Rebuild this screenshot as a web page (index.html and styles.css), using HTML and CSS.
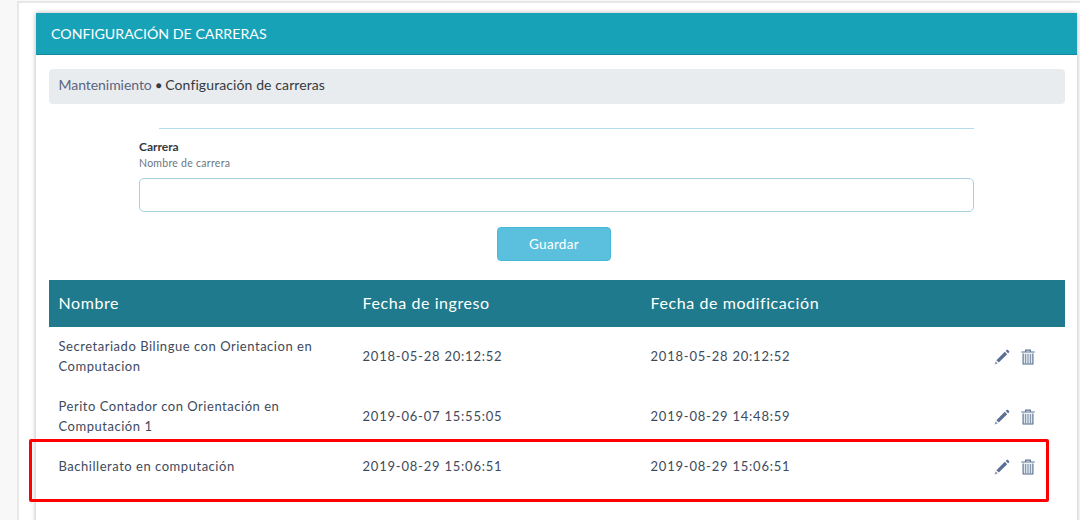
FILE: index.html
```html
<!DOCTYPE html>
<html lang="es">
<head>
<meta charset="utf-8">
<title>Configuración de carreras</title>
<link rel="stylesheet" href="styles.css">
</head>
<body>
<svg class="defs" width="0" height="0" aria-hidden="true">
  <symbol id="pencil" viewBox="0 0 16 16">
    <path d="M0.6 15.4 L1.6 12.2 L3.8 14.4 Z" fill="#8c9ab0"/>
    <path d="M2.4 11.2 L10.8 2.8 L13.2 5.2 L4.8 13.6 Z" fill="#5b6f94"/>
    <path d="M11.7 1.9 L12.8 0.8 Q13.3 0.5 13.8 0.8 L15.2 2.2 Q15.5 2.7 15.2 3.2 L14.1 4.3 Z" fill="#5b6f94"/>
  </symbol>
  <symbol id="trash" viewBox="0 0 14 16">
    <path d="M0.3 3 H13.7 M4.6 2.6 V1.1 H9.4 V2.6" fill="none" stroke="#5b7390" stroke-width="1.1"/>
    <path d="M1.6 4.4 H12.4 V15.6 H1.6 Z" fill="#dfe8ee"/>
    <path d="M2.1 4.4 V15 H11.9 V4.4" fill="none" stroke="#5b7390" stroke-width="1.1"/>
    <path d="M4.6 5 V14.6 M7 5 V14.6 M9.4 5 V14.6" fill="none" stroke="#6f849c" stroke-width=".9"/>
  </symbol>
</svg>
<div class="page">
  <div class="panel">
    <section class="card">
      <header class="card-head">CONFIGURACIÓN DE CARRERAS</header>
      <div class="card-body">
        <nav class="crumb"><span class="crumb-link">Mantenimiento</span> <span class="crumb-dot">●</span> Configuración de carreras</nav>
        <form class="form">
          <hr class="rule">
          <label class="label">Carrera</label>
          <small class="hint">Nombre de carrera</small>
          <input class="field" type="text">
          <div class="actions"><button class="btn" type="button">Guardar</button></div>
        </form>
        <table class="table">
          <colgroup><col class="c1"><col class="c2"><col class="c3"><col class="c4"></colgroup>
          <thead>
            <tr><th>Nombre</th><th>Fecha de ingreso</th><th>Fecha de modificación</th><th></th></tr>
          </thead>
          <tbody>
            <tr>
              <td>Secretariado Bilingue con Orientacion en Computacion</td>
              <td class="date">2018-05-28 20:12:52</td><td class="date">2018-05-28 20:12:52</td>
              <td class="ops"><svg class="i-pen"><use href="#pencil"/></svg><svg class="i-bin"><use href="#trash"/></svg></td>
            </tr>
            <tr>
              <td>Perito Contador con Orientación en Computación 1</td>
              <td class="date">2019-06-07 15:55:05</td><td class="date">2019-08-29 14:48:59</td>
              <td class="ops"><svg class="i-pen"><use href="#pencil"/></svg><svg class="i-bin"><use href="#trash"/></svg></td>
            </tr>
            <tr>
              <td>Bachillerato en computación</td>
              <td class="date">2019-08-29 15:06:51</td><td class="date">2019-08-29 15:06:51</td>
              <td class="ops"><svg class="i-pen"><use href="#pencil"/></svg><svg class="i-bin"><use href="#trash"/></svg></td>
            </tr>
          </tbody>
        </table>
      </div>
    </section>
  </div>
</div>
<div class="highlight"></div>
</body>
</html>
```

FILE: styles.css
```css
* { box-sizing: border-box; }
html, body { margin: 0; height: 520px; overflow: hidden; }
body {
  background: #f8f8f8;
  font-family: "Lato", "Noto Sans", sans-serif;
  color: #3e4a5c;
  font-size: 14px;
  position: relative;
}
.defs { position: absolute; }
.page { padding: 1px 0 0 17px; height: 520px; }
.panel {
  height: 519px;
  background: #fff;
  border-top: 2px solid #e8e8e8;
  border-left: 2px solid #e8e8e8;
  padding: 10px 0 0 17px;
}
.card {
  width: 1041px;
  height: 520px;
  background: #fff;
  box-shadow: 0 0 5px rgba(0,0,0,.3);
}
.card-head {
  height: 42px;
  background: #17a2b8;
  border-bottom: 1px solid #138a9d;
  color: #fff;
  font-size: 14.2px;
  line-height: 42px;
  padding-left: 15px;
}
.card-body { padding: 14px 12px 0 13px; }
.crumb {
  height: 35px;
  line-height: 32px;
  background: #e9ecef;
  border-radius: 4px;
  padding-left: 9.5px;
  font-size: 14px;
  color: #343a40;
  letter-spacing: .1px;
}
.crumb-link { color: #5b6480; letter-spacing: -.05px; }
.crumb-dot { font-size: 10px; vertical-align: 1px; }
.form { padding: 24px 91px 0 90px; }
.rule { margin: 0 0 0 20px; border: 0; border-top: 1px solid #b3dcef; }
.label {
  display: block;
  margin-top: 11px;
  font-size: 12px;
  line-height: 14px;
  font-weight: 700;
  color: #343a40;
}
.hint {
  display: block;
  margin-top: 3px;
  font-size: 10.5px;
  line-height: 13px;
  letter-spacing: .28px;
  color: #6c757d;
}
.field {
  display: block;
  width: 100%;
  height: 34px;
  margin-top: 8px;
  border: 1px solid #a9d0de;
  border-radius: 5px;
  background: #fff;
}
.actions { display: flex; justify-content: center; margin-top: 15px; padding-right: 5px; }
.btn {
  width: 114px;
  height: 34px;
  background: #5bc0de;
  border: 1px solid #46b8da;
  border-radius: 4px;
  color: #fff;
  font: inherit;
  font-size: 13.5px;
  letter-spacing: .3px;
}
.table {
  width: 1016px;
  margin-top: 19px;
  border-collapse: collapse;
  table-layout: fixed;
}
.c1 { width: 304px; }
.c2 { width: 288px; }
.c3 { width: 330px; }
.c4 { width: 94px; }
.table th {
  height: 47px;
  background: #1e7a8c;
  color: #fff;
  font-weight: 400;
  font-size: 16px;
  letter-spacing: .58px;
  text-align: left;
  padding: 0 9.5px 2px;
}
.table td {
  padding: 8px 9.5px 10px;
  font-size: 13px;
  line-height: 20px;
  letter-spacing: .53px;
  vertical-align: middle;
}
.table td.date { letter-spacing: .78px; }
.table tbody tr { height: 60px; }
.table tbody tr:last-child { height: 40px; }
.table td.ops { padding: 0 30.5px 4px 0; text-align: right; white-space: nowrap; }
.i-pen, .i-bin { display: inline-block; vertical-align: middle; }
.i-pen { width: 16px; height: 16px; margin-right: 11px; }
.i-bin { width: 14px; height: 16px; }
.highlight {
  position: absolute;
  left: 29px;
  top: 439px;
  width: 1020px;
  height: 63px;
  border: 3px solid #f00;
  border-radius: 2px;
  pointer-events: none;
}
```
